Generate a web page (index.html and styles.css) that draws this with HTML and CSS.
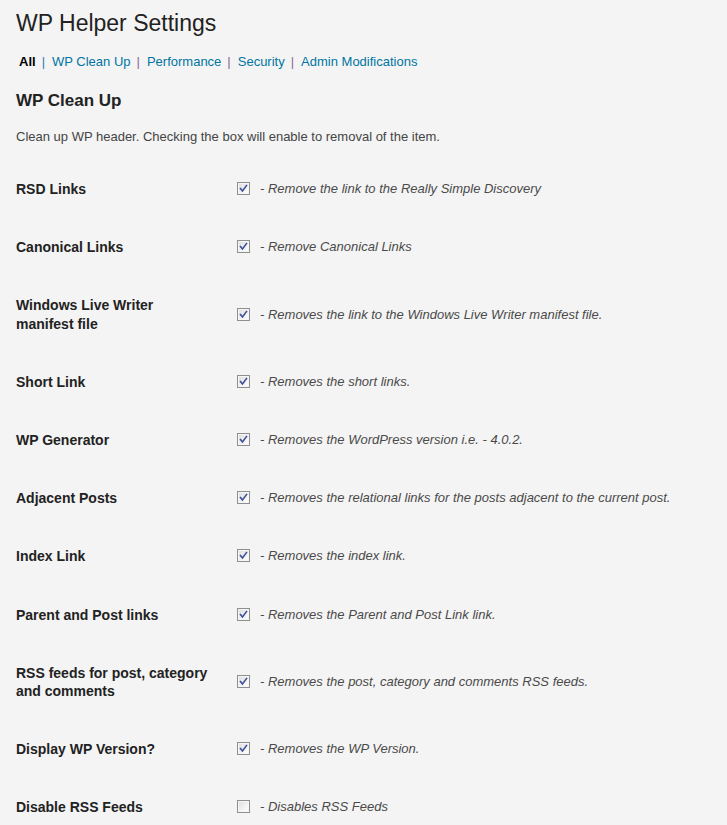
FILE: index.html
```html
<!DOCTYPE html>
<html>
<head>
<meta charset="utf-8">
<title>WP Helper Settings</title>
<link rel="stylesheet" href="styles.css">
</head>
<body>
<div class="wrap">
  <h2 class="page-title">WP Helper Settings</h2>
  <ul class="subsubsub">
    <li><a class="current">All</a><span class="sep sep-blue">|</span></li>
    <li><a>WP Clean Up</a><span class="sep">|</span></li>
    <li><a>Performance</a><span class="sep">|</span></li>
    <li><a>Security</a><span class="sep">|</span></li>
    <li><a>Admin Modifications</a></li>
  </ul>
  <h3 class="section-title">WP Clean Up</h3>
  <p class="section-desc">Clean up WP header. Checking the box will enable to removal of the item.</p>
  <table class="form-table">
    <tbody>
      <tr>
        <th>RSD Links</th>
        <td><label class="opt"><span class="cb checked"><svg viewBox="0 0 13 13" width="13" height="13"><path d="M3.5 6.5 L5.5 9 L9.5 3.5" /></svg></span><span class="desc">- Remove the link to the Really Simple Discovery</span></label></td>
      </tr>
      <tr>
        <th>Canonical Links</th>
        <td><label class="opt"><span class="cb checked"><svg viewBox="0 0 13 13" width="13" height="13"><path d="M3.5 6.5 L5.5 9 L9.5 3.5" /></svg></span><span class="desc">- Remove Canonical Links</span></label></td>
      </tr>
      <tr>
        <th>Windows Live Writer manifest file</th>
        <td><label class="opt"><span class="cb checked"><svg viewBox="0 0 13 13" width="13" height="13"><path d="M3.5 6.5 L5.5 9 L9.5 3.5" /></svg></span><span class="desc">- Removes the link to the Windows Live Writer manifest file.</span></label></td>
      </tr>
      <tr>
        <th>Short Link</th>
        <td><label class="opt"><span class="cb checked"><svg viewBox="0 0 13 13" width="13" height="13"><path d="M3.5 6.5 L5.5 9 L9.5 3.5" /></svg></span><span class="desc">- Removes the short links.</span></label></td>
      </tr>
      <tr>
        <th>WP Generator</th>
        <td><label class="opt"><span class="cb checked"><svg viewBox="0 0 13 13" width="13" height="13"><path d="M3.5 6.5 L5.5 9 L9.5 3.5" /></svg></span><span class="desc">- Removes the WordPress version i.e. - 4.0.2.</span></label></td>
      </tr>
      <tr>
        <th>Adjacent Posts</th>
        <td><label class="opt"><span class="cb checked"><svg viewBox="0 0 13 13" width="13" height="13"><path d="M3.5 6.5 L5.5 9 L9.5 3.5" /></svg></span><span class="desc">- Removes the relational links for the posts adjacent to the current post.</span></label></td>
      </tr>
      <tr>
        <th>Index Link</th>
        <td><label class="opt"><span class="cb checked"><svg viewBox="0 0 13 13" width="13" height="13"><path d="M3.5 6.5 L5.5 9 L9.5 3.5" /></svg></span><span class="desc">- Removes the index link.</span></label></td>
      </tr>
      <tr>
        <th>Parent and Post links</th>
        <td><label class="opt"><span class="cb checked"><svg viewBox="0 0 13 13" width="13" height="13"><path d="M3.5 6.5 L5.5 9 L9.5 3.5" /></svg></span><span class="desc">- Removes the Parent and Post Link link.</span></label></td>
      </tr>
      <tr>
        <th>RSS feeds for post, category and comments</th>
        <td><label class="opt"><span class="cb checked"><svg viewBox="0 0 13 13" width="13" height="13"><path d="M3.5 6.5 L5.5 9 L9.5 3.5" /></svg></span><span class="desc">- Removes the post, category and comments RSS feeds.</span></label></td>
      </tr>
      <tr>
        <th>Display WP Version?</th>
        <td><label class="opt"><span class="cb checked"><svg viewBox="0 0 13 13" width="13" height="13"><path d="M3.5 6.5 L5.5 9 L9.5 3.5" /></svg></span><span class="desc">- Removes the WP Version.</span></label></td>
      </tr>
      <tr>
        <th>Disable RSS Feeds</th>
        <td><label class="opt"><span class="cb"></span><span class="desc">- Disables RSS Feeds</span></label></td>
      </tr>
    </tbody>
  </table>
</div>
</body>
</html>
```

FILE: styles.css
```css
html, body {
  margin: 0;
  padding: 0;
  background: #f4f4f4;
}

body {
  font-family: Arial, "Liberation Sans", sans-serif;
  font-size: 13px;
  color: #333;
}

.wrap {
  padding: 9px 16px 0 16px;
}

.page-title {
  margin: 0;
  font-size: 23px;
  line-height: 29px;
  font-weight: normal;
  color: #222;
}

.subsubsub {
  list-style: none;
  margin: 15px 0 0 0;
  padding: 0 0 0 3px;
  display: flex;
  font-size: 13px;
  line-height: 18px;
}

.subsubsub a {
  color: #0074a2;
  text-decoration: none;
}

.subsubsub a.current {
  color: #000;
  font-weight: bold;
}

.sep {
  color: #8a6a91;
  margin: 0 7px 0 6px;
}

.sep-blue {
  color: #2a7eab;
}

.section-title {
  margin: 19px 0 0 0;
  font-size: 17px;
  line-height: 22px;
  font-weight: bold;
  color: #222;
}

.section-desc {
  margin: 16px 0 0 0;
  font-size: 13px;
  line-height: 18px;
  color: #444;
}

.form-table {
  margin-top: 14px;
  border-collapse: collapse;
  border-spacing: 0;
}

.form-table th {
  width: 196px;
  padding: 20px 10px 20px 0;
  text-align: left;
  vertical-align: top;
  font-size: 14px;
  line-height: 1.3;
  font-weight: bold;
  color: #222;
}

.form-table td {
  padding: 10px 0 10px 15px;
  vertical-align: middle;
}

.opt {
  display: flex;
  align-items: center;
}

.cb {
  width: 11px;
  height: 11px;
  border: 1px solid #8f8f8f;
  background: linear-gradient(135deg, #dcdcdc 0%, #f3f3f3 60%, #ffffff 100%);
  box-shadow: inset 0 0 0 1px #f6f6f6;
  margin-right: 10px;
  position: relative;
  flex: none;
  margin-top: -1px;
}

.cb svg {
  position: absolute;
  left: -1px;
  top: -1px;
}

.cb svg path {
  fill: none;
  stroke: #3c4f9a;
  stroke-width: 1.6;
  stroke-linecap: square;
}

.desc {
  font-style: italic;
  font-size: 13px;
  line-height: 18px;
  color: #4a4a4a;
}
```
